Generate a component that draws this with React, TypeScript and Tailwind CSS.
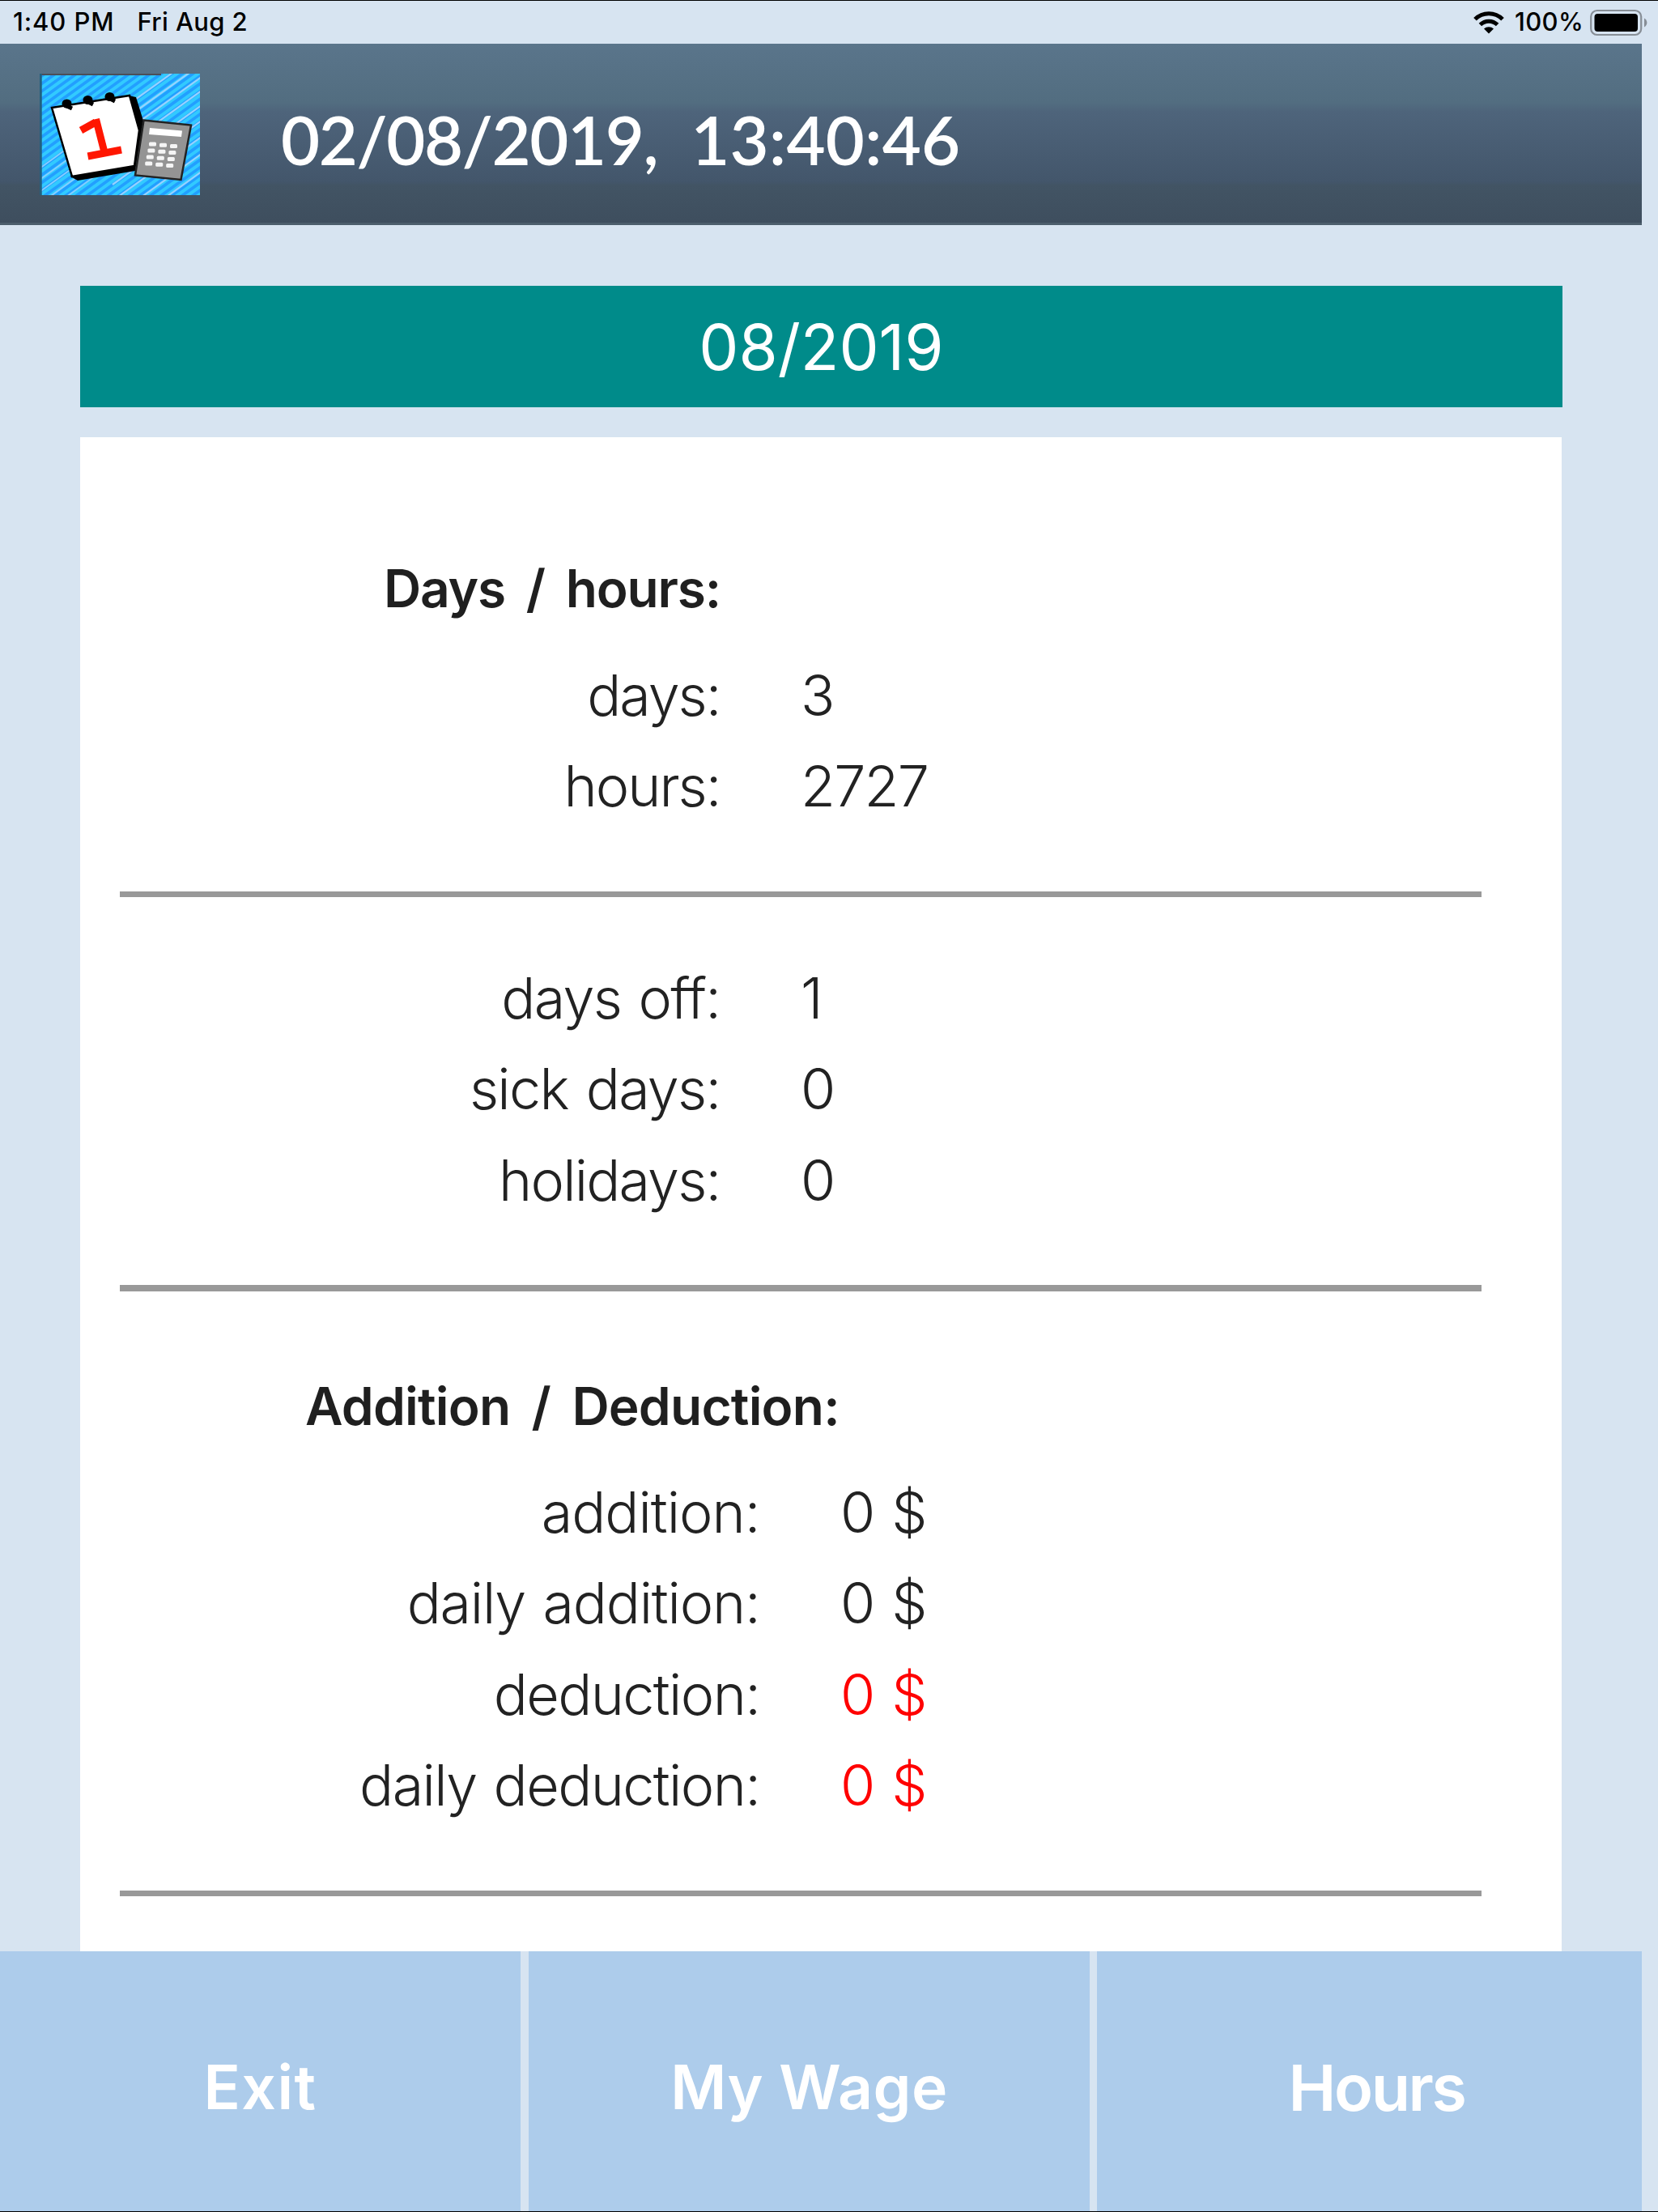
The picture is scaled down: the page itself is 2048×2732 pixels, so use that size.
const inter = "font-['Inter','Liberation_Sans',sans-serif]";

type Entry = { label: string; value: string; spacing: string; red?: boolean };

function Row({ entry, labelWidth }: { entry: Entry; labelWidth: string }) {
  return (
    <div className="flex h-[112.3px] items-center text-[70px] leading-none font-light whitespace-nowrap text-[#222]">
      <div className={`shrink-0 text-right ${labelWidth}`}>
        <span className={entry.spacing}>{entry.label}</span>
      </div>
      <div className={`pl-[99.5px] tracking-[-1.8px] [word-spacing:4px] ${entry.red ? "text-[#ff0000]" : ""}`}>{entry.value}</div>
    </div>
  );
}

const cyanStripes = Array.from({ length: 36 }, (_, i) => i * 9.4);
const paleStripes = [52, 67, 83, 100, 118, 137, 157, 178, 200];
const lowerStripes = [131, 145, 160, 175, 190];

function Logo() {
  return (
    <svg width="198" height="150" viewBox="0 0 198 150">
      <defs>
        <clipPath id="logo-clip">
          <rect width="198" height="150" />
        </clipPath>
        <filter id="soft" x="-5%" y="-5%" width="110%" height="110%">
          <feGaussianBlur stdDeviation="0.6" />
        </filter>
      </defs>
      <g clipPath="url(#logo-clip)">
        <rect width="198" height="150" fill="#229fff" />
        <g filter="url(#soft)">
          {cyanStripes.map((y) => (
            <line key={y} x1={0} y1={y} x2={200} y2={y - 144} stroke="#31caff" strokeWidth="4" />
          ))}
          {paleStripes.map((y) => (
            <line key={y} x1={90} y1={y} x2={200} y2={y - 79} stroke="#97d2ff" strokeWidth="2.2" />
          ))}
          {lowerStripes.map((y) => (
            <line key={y} x1={0} y1={y - 14} x2={80} y2={y - 72} stroke="#86ceff" strokeWidth="2" />
          ))}
          <path d="M0 1H150" stroke="#4b4f58" strokeWidth="2" />
          <path d="M1 0V150" stroke="#23617f" strokeWidth="3.5" />
          <path d="M38 127L47 132L118 120L128 58L119 29L110 27Z" fill="#000" />
          <path d="M15 42L111 27L123 70L117 114L40 127Z" fill="#fff" stroke="#000" strokeWidth="2.5" />
          <path d="M29 38L40 43M56 33L66 38M83 29L93 34" stroke="#000" strokeWidth="5" />
          <ellipse cx="33.5" cy="37" rx="6" ry="5.5" />
          <ellipse cx="59.5" cy="32.5" rx="6" ry="5.5" />
          <ellipse cx="86.5" cy="28.5" rx="6" ry="5.5" />
          <path d="M51 70L69 60M69.5 56L80.5 99M59.5 102L101 94" fill="none" stroke="#ff1500" strokeWidth="9" />
          <path d="M128.5 57.5L187 63.5L174.5 131L118 125.5Z" fill="#949494" stroke="#222" strokeWidth="2.5" />
          <path d="M136 67L176 70.5L175 78L135 75Z" fill="#fff" />
          {[0, 1, 2, 3].map((r) =>
            [0, 1, 2].map((c) => (
              <rect key={`${r}-${c}`} x={135 + c * 13 - r * 1.6} y={84.5 + r * 8 + c * 1.2} width="9" height="5" rx="1.5" fill="#f5f5f5" />
            )),
          )}
        </g>
      </g>
    </svg>
  );
}

function StatusBar() {
  return (
    <div className="flex h-[54px] items-center justify-between border-t border-black pr-[12px] pl-[16px] text-[31px] leading-none font-medium text-black">
      <div className="-mt-[2px] flex gap-[28px] whitespace-pre">
        <span className="tracking-[0.9px]">1:40 PM</span>
        <span className="tracking-[0.4px]">Fri Aug 2</span>
      </div>
      <div className="flex items-center">
        <svg width="38" height="28" viewBox="0 0 38 28" className="mr-[13px]" fill="none" stroke="#000">
          <path d="M2 9.8A24 24 0 0 1 36 9.8" strokeWidth="5" />
          <path d="M8.4 16.6A15 15 0 0 1 29.6 16.6" strokeWidth="5" />
          <path d="M19 27.5L13 21.6A8.6 8.6 0 0 1 25 21.6Z" fill="#000" stroke="none" />
        </svg>
        <span className="-mt-[2px] mr-[8px] tracking-[0.3px]">100%</span>
        <svg width="72" height="34" viewBox="0 0 72 34">
          <rect x="1.2" y="2" width="62" height="30" rx="7.5" fill="none" stroke="#878e96" strokeWidth="2.2" />
          <rect x="5.5" y="6" width="53.5" height="22" rx="4" fill="#000" />
          <path d="M67 11.5C71.5 14 71.5 20 67 22.5Z" fill="#878e96" />
        </svg>
      </div>
    </div>
  );
}

const hours: Entry[] = [
  { label: "days:", value: "3", spacing: "tracking-[-2px]" },
  { label: "hours:", value: "2727", spacing: "tracking-[-2px]" },
];
const off: Entry[] = [
  { label: "days off:", value: "1", spacing: "tracking-[-1.6px] [word-spacing:3px]" },
  { label: "sick days:", value: "0", spacing: "tracking-[-1.7px] [word-spacing:4px]" },
  { label: "holidays:", value: "0", spacing: "tracking-[-1.8px]" },
];
const money: Entry[] = [
  { label: "addition:", value: "0 $", spacing: "tracking-[-1px]" },
  { label: "daily addition:", value: "0 $", spacing: "tracking-[-1.2px] [word-spacing:3px]" },
  { label: "deduction:", value: "0 $", spacing: "tracking-[-1.6px]" },
  { label: "daily deduction:", value: "0 $", spacing: "tracking-[-1.6px] [word-spacing:3px]" },
].map((e) => ({ ...e, red: e.label.endsWith("deduction:") }));

function Rule({ tall = false }: { tall?: boolean }) {
  return <div className={`ml-[49px] w-[1682px] shrink-0 bg-[#999] ${tall ? "h-[8px]" : "h-[7px]"}`} />;
}

const heading = "h-[68px] text-[64px] leading-[68px] font-semibold whitespace-nowrap text-[#1f1f1f]";

export default function App() {
  return (
    <div className={`flex h-[2732px] w-[2048px] flex-col overflow-hidden border-b border-black bg-[#d7e4f1] ${inter}`}>
      <StatusBar />
      <header className="flex h-[224px] w-[2028px] shrink-0 items-center border-b-[3px] border-[#4c5e6c] bg-[linear-gradient(to_bottom,#5a758b_0%,#526d80_33%,#4e647b_38%,#43566b_77%,#425464_79%,#3e4e5e_100%)] pl-[49px]">
        <div className="mt-[3px] h-[150px] w-[198px]"><Logo /></div>
        <div className="mt-[15px] ml-[100px] flex gap-[41px] font-['Lato',sans-serif] text-[83px] leading-none font-semibold whitespace-nowrap text-white">
          <span className="tracking-[-1.4px]">02/08/2019,</span>
          <span className="tracking-[0.3px]">13:40:46</span>
        </div>
      </header>
      <div className="mt-[75px] ml-[99px] flex h-[150px] w-[1831px] shrink-0 items-center justify-center bg-[#008b8a] pt-[2px] text-[78px] leading-none font-normal text-white">
        08/2019
      </div>
      <main className="mt-[37px] ml-[99px] flex h-[1870px] w-[1830px] shrink-0 flex-col overflow-hidden bg-white">
        <h2 className={`mt-[153px] ml-[375px] tracking-[-1.2px] [word-spacing:11px] ${heading}`}>Days / hours:</h2>
        <div className="mt-[42px]">
          {hours.map((e) => <Row key={e.label} entry={e} labelWidth="w-[790.5px]" />)}
        </div>
        <div className="h-[73.4px]" />
        <Rule />
        <div className="mt-[69px]">
          {off.map((e) => <Row key={e.label} entry={e} labelWidth="w-[790.5px]" />)}
        </div>
        <div className="h-[73.1px]" />
        <Rule tall />
        <h2 className={`mt-[108px] ml-[278px] tracking-[-0.8px] [word-spacing:11px] ${heading}`}>Addition / Deduction:</h2>
        <div className="mt-[41px]">
          {money.map((e) => <Row key={e.label} entry={e} labelWidth="w-[839.5px]" />)}
        </div>
        <div className="h-[73.8px]" />
        <Rule />
      </main>
      <nav className="flex h-[321px] w-[2028px] shrink-0 text-[75px] leading-none font-semibold text-white">
        <button className="mr-[10px] flex w-[643px] items-center justify-center bg-[#adcceb] pt-[14px] tracking-[1.5px]">Exit</button>
        <button className="mr-[9px] flex w-[693px] items-center justify-center bg-[#adcceb] pt-[14px] tracking-[0.4px]">My Wage</button>
        <button className="flex w-[673px] items-center justify-center bg-[#adcceb] pt-[15px] pl-[18px] text-[79px] tracking-[-2.4px]">Hours</button>
      </nav>
    </div>
  );
}
